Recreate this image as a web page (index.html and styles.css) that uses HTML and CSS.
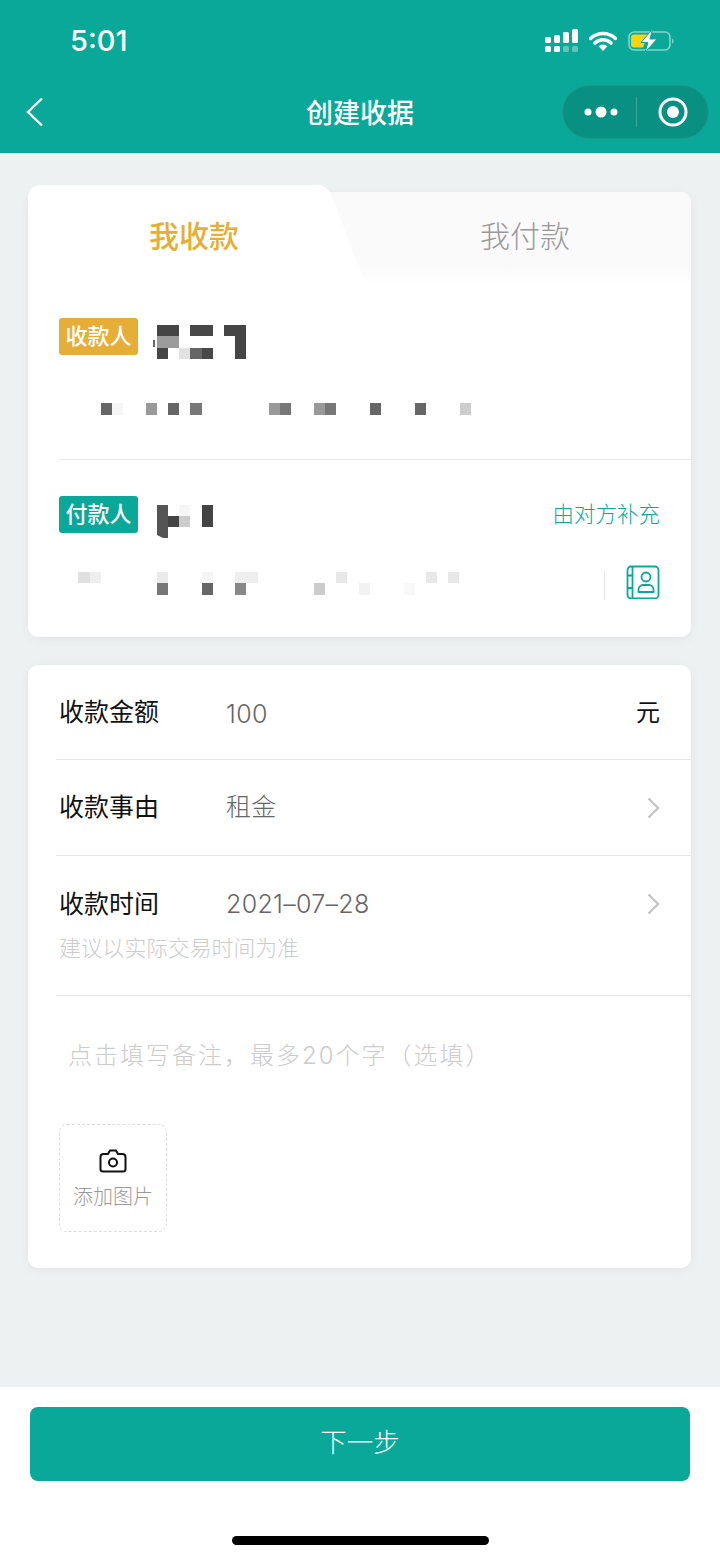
FILE: index.html
```html
<!DOCTYPE html>
<html lang="zh">
<head>
    <meta charset="utf-8">
    <meta name="viewport" content="width=device-width, initial-scale=1.0">
    <title>创建收据</title>
    <link rel="stylesheet" href="styles.css">
</head>
<body>
    <header class="header">
        <div class="status-bar">
            <span class="time">5:01</span>
            <div class="status-icons">
                <svg class="icon-signal" width="34" height="24" viewBox="0 0 34 24">
                    <rect x="0" y="8" width="6" height="6" rx="1.5" fill="#fff"/>
                    <rect x="9" y="6" width="6" height="8" rx="1.5" fill="#fff"/>
                    <rect x="18" y="3" width="6" height="11" rx="1.5" fill="#fff"/>
                    <rect x="27" y="0" width="6" height="14" rx="1.5" fill="#fff"/>
                    <rect x="0" y="17" width="6" height="6" rx="1.5" fill="#fff"/>
                    <rect x="9" y="17" width="6" height="6" rx="1.5" fill="#fff"/>
                    <rect x="18" y="17" width="6" height="6" rx="1.5" fill="#fff" opacity=".35"/>
                    <rect x="27" y="17" width="6" height="6" rx="1.5" fill="#fff" opacity=".35"/>
                </svg>
                <svg class="icon-wifi" width="28" height="22" viewBox="0 0 28 22">
                    <path d="M1.5 8.5a18 18 0 0 1 25 0M6 13a11.6 11.6 0 0 1 16 0" fill="none" stroke="#fff" stroke-width="3.4" stroke-linecap="round"/>
                    <path d="M9.6 16.3a6.4 6.4 0 0 1 8.8 0L14 21z" fill="#fff"/>
                </svg>
                <svg class="icon-battery" width="46" height="24" viewBox="0 0 46 24">
                    <rect x="1" y="3" width="41" height="18" rx="5" fill="none" stroke="#fff" stroke-opacity=".5" stroke-width="1.6"/>
                    <path d="M44 9.500c1 .4 1.600 1.400 1.600 2.500s-.6 2.100-1.600 2.500z" fill="#fff" opacity=".5"/>
                    <path d="M6 5.500h14l-5 13H6a3 3 0 0 1-3-3v-7a3 3 0 0 1 3-3z" fill="#f8d30f"/>
                    <path d="M24.500 0 13 13.500h7L17 23.500 29 10h-7z" fill="#fff" stroke="#0aa899" stroke-width="1"/>
                </svg>
            </div>
        </div>
        <nav class="nav-bar">
            <svg class="back" width="18" height="30" viewBox="0 0 18 30">
                <path d="M16 1.500 2 15l14 13.500" fill="none" stroke="#fff" stroke-width="2.400"/>
            </svg>
            <h1 class="nav-title">创建收据</h1>
            <div class="capsule">
                <svg width="36" height="14" viewBox="0 0 36 14">
                    <circle cx="5" cy="7" r="3.500" fill="#fff"/>
                    <circle cx="18" cy="7" r="5.500" fill="#fff"/>
                    <circle cx="31" cy="7" r="3.500" fill="#fff"/>
                </svg>
                <span class="capsule-line"></span>
                <svg width="30" height="30" viewBox="0 0 30 30">
                    <circle cx="15" cy="15" r="13" fill="none" stroke="#fff" stroke-width="3"/>
                    <circle cx="15" cy="15" r="6" fill="#fff"/>
                </svg>
            </div>
        </nav>
    </header>

    <main class="content">
        <section class="card card-parties">
            <div class="tabs">
                <div class="tab tab-active">我收款</div>
                <div class="tab tab-other">
                    <svg class="tab-slant" width="44" height="89" viewBox="0 0 44 89">
                        <path d="M0 0 33 85c1 2.500 4 4 8 4H0z" fill="#fff"/>
                    </svg>
                    <span class="tab-label">我付款</span>
                </div>
            </div>

            <div class="party party-payee">
                <div class="party-head">
                    <span class="badge badge-yellow">收款人</span>
                    <svg class="mosaic-name" width="96" height="34" viewBox="153 325 96 34">
                        <rect x="157" y="325" width="22" height="11" fill="#454545"/>
                        <rect x="157" y="336" width="22" height="12" fill="#9c9c9c"/>
                        <rect x="153" y="340" width="2" height="7" fill="#666"/>
                        <rect x="157" y="348" width="11" height="11" fill="#454545"/>
                        <rect x="179" y="348" width="11" height="11" fill="#e2e2e2"/>
                        <rect x="190" y="325" width="23" height="11" fill="#484848"/>
                        <rect x="190" y="348" width="12" height="11" fill="#666"/>
                        <rect x="202" y="348" width="11" height="11" fill="#484848"/>
                        <rect x="224" y="325" width="22" height="11" fill="#454545"/>
                        <rect x="235" y="336" width="11" height="23" fill="#454545"/>
                    </svg>
                </div>
                <svg class="mosaic-line" width="420" height="12" viewBox="59 403 420 12">
                    <rect x="101" y="403" width="11" height="12" fill="#666"/>
                    <rect x="112" y="403" width="11" height="12" fill="#f5f5f5"/>
                    <rect x="146" y="403" width="11" height="12" fill="#999"/>
                    <rect x="168" y="403" width="11" height="12" fill="#666"/>
                    <rect x="190" y="403" width="12" height="12" fill="#777"/>
                    <rect x="269" y="403" width="11" height="12" fill="#999"/>
                    <rect x="280" y="403" width="11" height="12" fill="#777"/>
                    <rect x="314" y="403" width="11" height="12" fill="#999"/>
                    <rect x="325" y="403" width="11" height="12" fill="#777"/>
                    <rect x="370" y="403" width="11" height="12" fill="#666"/>
                    <rect x="415" y="403" width="11" height="12" fill="#666"/>
                    <rect x="460" y="403" width="11" height="12" fill="#ccc"/>
                </svg>
            </div>

            <div class="party party-payer">
                <div class="party-head">
                    <span class="badge badge-teal">付款人</span>
                    <svg class="mosaic-name-short" width="56" height="33" viewBox="157 505 56 33">
                        <path d="M157 505h11v33h-5l-6-3z" fill="#555"/>
                        <rect x="168" y="516" width="11" height="11" fill="#444"/>
                        <rect x="179" y="516" width="11" height="11" fill="#ccc"/>
                        <rect x="179" y="505" width="11" height="11" fill="#f6f6f6"/>
                        <rect x="202" y="505" width="11" height="22" fill="#444"/>
                    </svg>
                    <span class="fill-by-other">由对方补充</span>
                </div>
                <div class="payer-foot">
                    <svg class="mosaic-line-payer" width="400" height="23" viewBox="59 572 400 23">
                        <rect x="78" y="572" width="12" height="11" fill="#e0e0e0"/>
                        <rect x="90" y="572" width="11" height="11" fill="#eee"/>
                        <rect x="157" y="572" width="11" height="11" fill="#eaeaea"/>
                        <rect x="202" y="572" width="11" height="11" fill="#f5f5f5"/>
                        <rect x="235" y="572" width="23" height="11" fill="#eee"/>
                        <rect x="336" y="572" width="11" height="11" fill="#e8e8e8"/>
                        <rect x="426" y="572" width="11" height="11" fill="#e8e8e8"/>
                        <rect x="448" y="572" width="11" height="11" fill="#e8e8e8"/>
                        <rect x="157" y="583" width="11" height="12" fill="#777"/>
                        <rect x="202" y="583" width="11" height="12" fill="#666"/>
                        <rect x="235" y="583" width="11" height="12" fill="#888"/>
                        <rect x="314" y="583" width="11" height="12" fill="#ccc"/>
                        <rect x="359" y="583" width="11" height="12" fill="#f2f2f2"/>
                        <rect x="404" y="583" width="11" height="12" fill="#f8f8f8"/>
                    </svg>
                    <span class="foot-line"></span>
                    <svg class="icon-contacts" width="34" height="34" viewBox="0 0 34 34">
                        <rect x="1.500" y="1.500" width="31" height="32" rx="3.500" fill="none" stroke="#0aa899" stroke-width="1.800"/>
                        <path d="M6.500 1.500v32M1.500 10.500h5M1.500 23h5" fill="none" stroke="#0aa899" stroke-width="1.800"/>
                        <circle cx="20" cy="12" r="4.500" fill="none" stroke="#0aa899" stroke-width="1.800"/>
                        <path d="M12.500 27v-2.500c0-2.500 2-4.500 4.500-4.500h6c2.500 0 4.500 2 4.500 4.500V27z" fill="none" stroke="#0aa899" stroke-width="1.800" stroke-linejoin="round"/>
                    </svg>
                </div>
            </div>
        </section>

        <section class="card card-form">
            <div class="row row-amount">
                <span class="row-label">收款金额</span>
                <span class="row-value row-value-amount">100</span>
                <span class="row-unit">元</span>
            </div>
            <div class="row row-reason">
                <span class="row-label">收款事由</span>
                <span class="row-value row-value-cjk">租金</span>
                <svg class="chevron" width="13" height="22" viewBox="0 0 13 22">
                    <path d="M1.500 1.500 11 11l-9.500 9.500" fill="none" stroke="#c4c4c4" stroke-width="2.400"/>
                </svg>
            </div>
            <div class="row row-time">
                <div class="row-main">
                    <span class="row-label">收款时间</span>
                    <span class="row-value">2021–07–28</span>
                    <svg class="chevron" width="13" height="22" viewBox="0 0 13 22">
                        <path d="M1.500 1.500 11 11l-9.500 9.500" fill="none" stroke="#c4c4c4" stroke-width="2.400"/>
                    </svg>
                </div>
                <p class="row-hint">建议以实际交易时间为准</p>
            </div>
            <p class="remark">点击填写备注，最多20个字（选填）</p>
            <div class="add-photo">
                <svg width="28" height="24" viewBox="0 0 28 24">
                    <path d="M4 5h5l2-3.500h6L19 5h5a3 3 0 0 1 2.500 3v12a2.500 2.500 0 0 1-2.500 2.500H4A2.500 2.500 0 0 1 1.500 20V8A3 3 0 0 1 4 5z" fill="none" stroke="#111" stroke-width="2" stroke-linejoin="round"/>
                    <circle cx="14" cy="13.500" r="4" fill="none" stroke="#111" stroke-width="2"/>
                </svg>
                <span class="add-photo-text">添加图片</span>
            </div>
        </section>
    </main>

    <footer class="footer">
        <button class="next-button" type="button">下一步</button>
        <div class="home-indicator"></div>
    </footer>
</body>
</html>
```

FILE: styles.css
```css
* {
    box-sizing: border-box;
}

html, body {
    height: 100%;
}

body {
    margin: 0;
    display: flex;
    flex-direction: column;
    height: 1558px;
    overflow: hidden;
    background-color: #edf1f2;
    font-family: "Noto Sans CJK SC", "Noto Sans", sans-serif;
}

/* Header */
.header {
    height: 153px;
    flex: none;
    background-color: #0aa899;
    color: #fff;
}

.status-bar {
    height: 85px;
    padding: 0 46px 0 70px;
    display: flex;
    align-items: flex-start;
    justify-content: space-between;
}

.time {
    margin-top: 22px;
    font-family: Inter, "Liberation Sans", sans-serif;
    font-size: 29px;
    line-height: 38px;
    font-weight: 500;
}

.status-icons {
    display: flex;
    align-items: flex-start;
    padding-top: 29px;
}

.icon-wifi {
    margin: 1px 0 0 10px;
}

.icon-battery {
    margin-left: 11px;
}

.nav-bar {
    position: relative;
    height: 68px;
    display: flex;
    align-items: center;
    justify-content: space-between;
    padding: 0 11px 14px 26px;
}

.nav-title {
    position: absolute;
    top: 0;
    left: 0;
    right: 0;
    margin: 0;
    text-align: center;
    font-size: 27px;
    font-weight: 500;
    line-height: 54px;
}

.capsule {
    width: 147px;
    height: 54px;
    display: flex;
    align-items: center;
    padding-left: 20px;
    border: 1px solid rgba(255, 255, 255, 0.08);
    border-radius: 27px;
    background-color: rgba(0, 0, 0, 0.14);
}

.capsule-line {
    width: 1px;
    height: 30px;
    margin: 0 21px 0 17px;
    background-color: rgba(255, 255, 255, 0.22);
}

/* Cards */
.content {
    flex: 1;
    padding: 39px 29px 0 28px;
}

.card {
    background-color: #fff;
    border-radius: 10px;
    box-shadow: 0 2px 12px rgba(0, 0, 0, 0.05);
}

.card-parties {
    height: 445px;
}

.tabs {
    display: flex;
    height: 89px;
}

.tab {
    font-size: 30px;
    line-height: 44px;
    text-align: center;
}

.tab-active {
    width: 302px;
    height: 96px;
    margin-top: -7px;
    padding: 27px 0 0 30px;
    background-color: #fff;
    border-radius: 12px 12px 0 0;
    color: #e5ae36;
    font-weight: 500;
}

.tab-other {
    position: relative;
    flex: 1;
    padding: 20px 0 0 29px;
    background: linear-gradient(#fafafb 80%, #fdfdfd);
    border-radius: 0 10px 0 0;
    color: #999;
}

.tab-label {
    font-weight: 300;
}

.tab-slant {
    position: absolute;
    top: 0;
    left: 0;
}

.party-payee {
    height: 179px;
    margin-left: 31px;
    padding-top: 37px;
    border-bottom: 1px solid #e8e8e8;
}

.party-payer {
    padding: 36px 31px 0;
}

.party-head {
    display: flex;
    align-items: flex-start;
}

.badge {
    width: 79px;
    height: 37px;
    flex: none;
    border-radius: 3px;
    color: #fff;
    font-size: 22px;
    font-weight: 500;
    line-height: 33px;
    text-align: center;
}

.badge-yellow {
    background-color: #e6ae37;
}

.badge-teal {
    background-color: #0aa899;
}

.mosaic-name {
    margin: 7px 0 0 15px;
}

.mosaic-line {
    display: block;
    margin-top: 44px;
}

.mosaic-name-short {
    margin: 9px 0 0 19px;
}

.fill-by-other {
    margin-left: auto;
    color: #0aa899;
    font-size: 21.500px;
    font-weight: 300;
    line-height: 33px;
}

.payer-foot {
    display: flex;
    align-items: flex-start;
    margin-top: 27px;
}

.mosaic-line-payer {
    margin-top: 7px;
}

.foot-line {
    width: 1px;
    height: 30px;
    margin: 5px 21px 0 145px;
    background-color: #e8e8e8;
}

.card-form {
    height: 603px;
    margin-top: 28px;
}

.row {
    margin-left: 28px;
    padding: 0 31px 0 3px;
    display: flex;
    align-items: center;
    border-bottom: 1px solid #e6e6e6;
}

.row-amount {
    height: 95px;
}

.row-reason {
    height: 96px;
}

.row-time {
    height: 140px;
    display: block;
    padding-top: 30px;
}

.row-main {
    display: flex;
    align-items: center;
    height: 36px;
}

.row-label {
    width: 167px;
    flex: none;
    margin-bottom: 5px;
    color: #111;
    font-size: 25px;
    line-height: 36px;
}

.row-value {
    flex: 1;
    color: #666;
    font-family: Inter, "Noto Sans CJK SC", sans-serif;
    font-size: 25px;
    font-weight: 300;
    letter-spacing: 0.3px;
    line-height: 36px;
}

.row-value-amount {
    margin-top: 4px;
}

.row-value-cjk {
    margin-bottom: 1px;
}

.row-unit {
    margin-bottom: 4px;
    color: #111;
    font-size: 24px;
}

.chevron {
    flex: none;
}

.row-hint {
    margin: 10px 0 0;
    color: #ccc;
    font-size: 21.800px;
    font-weight: 300;
    line-height: 30px;
}

.remark {
    margin: 42px 0 0 40px;
    color: #ccc;
    font-family: Inter, "Noto Sans CJK SC", sans-serif;
    font-size: 24px;
    font-weight: 300;
    letter-spacing: 2px;
    line-height: 36px;
}

.add-photo {
    width: 108px;
    height: 108px;
    margin: 50px 0 0 31px;
    display: flex;
    flex-direction: column;
    align-items: center;
    padding-top: 24px;
    border: 1px dashed #ddd;
    border-radius: 8px;
}

.add-photo-text {
    margin-top: 8px;
    color: #999;
    font-size: 20px;
    font-weight: 300;
    line-height: 30px;
}

/* Bottom bar */
.footer {
    height: 171px;
    flex: none;
    padding: 20px 30px 0;
    background-color: #fff;
}

.next-button {
    display: block;
    width: 100%;
    height: 74px;
    padding: 0 0 8px;
    border: none;
    border-radius: 8px;
    background-color: #0aa899;
    color: #fff;
    font-family: inherit;
    font-size: 26.500px;
    font-weight: 300;
}

.home-indicator {
    width: 257px;
    height: 9px;
    margin: 55px auto 0;
    border-radius: 5px;
    background-color: #000;
}
```
